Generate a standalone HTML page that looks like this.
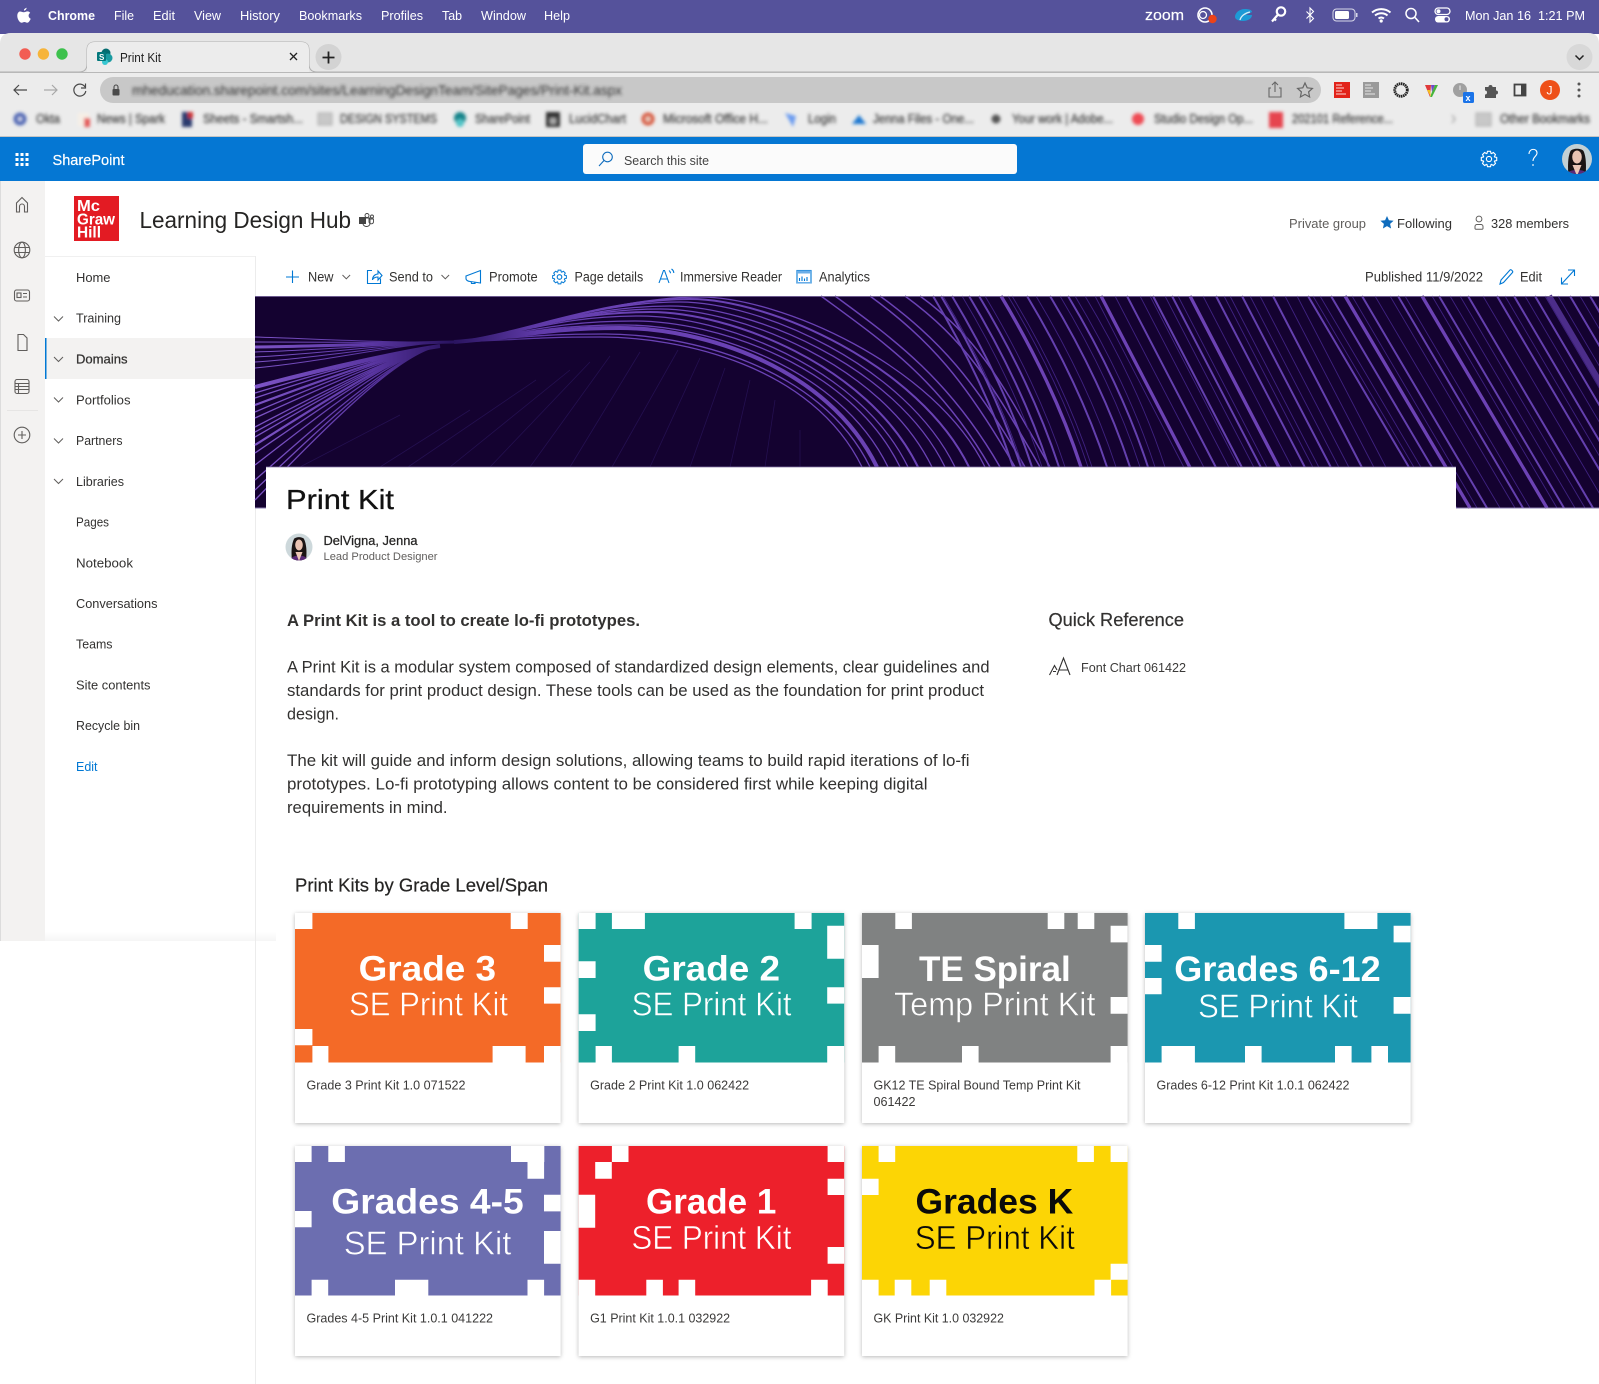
<!DOCTYPE html>
<html lang="en"><head><meta charset="utf-8"><title>Print Kit</title>
<style>
html,body{margin:0;padding:0;background:#fff;width:1599px;height:1384px;overflow:hidden}
svg{display:block;font-family:"Liberation Sans",Arial,sans-serif}
.n{font-size:13px;fill:#323130}
.t{font-size:13.5px;fill:#323130}
.b{font-size:16.5px;fill:#323130}
.m{font-size:12.5px;fill:#fff}
.c{font-size:13px;fill:#3b3a39}
.h1{font-size:35px;font-weight:700;fill:#fff}
.h2{font-size:33px;fill:#fff;stroke-width:.55}
.bk{font-size:12.5px;fill:#444;stroke:#444;stroke-width:.3}
.ri{fill:none;stroke:#605e5c;stroke-width:1.1}
.bi{fill:none;stroke:#0078d4;stroke-width:1.1}
.ch{fill:none;stroke:#605e5c;stroke-width:1}
.card{fill:#fff;filter:drop-shadow(0 1px 2px rgba(0,0,0,.28))}
</style></head><body>
<svg width="1599" height="1384" viewBox="0 0 1599 1384" xmlns="http://www.w3.org/2000/svg">
<defs>
<filter id="bl" x="-5%" y="-60%" width="110%" height="220%"><feGaussianBlur stdDeviation="1.6"/></filter>
<clipPath id="av1"><circle cx="1577" cy="159" r="15"/></clipPath>
<clipPath id="av2"><circle cx="299" cy="547" r="13.5"/></clipPath>
<linearGradient id="fd" x1="0" y1="0" x2="0" y2="1"><stop offset="0" stop-color="#fff"/><stop offset="1" stop-color="#f6f6f6"/></linearGradient>
<linearGradient id="lf" gradientUnits="userSpaceOnUse" x1="255" y1="0" x2="450" y2="0"><stop offset="0" stop-color="#7d54c6"/><stop offset=".6" stop-color="#5a36a2"/><stop offset="1" stop-color="#2a1460"/></linearGradient>
<linearGradient id="lr" gradientUnits="userSpaceOnUse" x1="454" y1="0" x2="620" y2="0"><stop offset="0" stop-color="#2a1460"/><stop offset=".5" stop-color="#5f3aa8"/><stop offset="1" stop-color="#6a42b4"/></linearGradient>
<path id="gear" d="M4.98-1.81L6.87-1.34 6.87 1.34 4.98 1.81 4.8 2.24 5.8 3.91 3.91 5.8 2.24 4.8 1.81 4.98 1.34 6.87-1.34 6.87-1.81 4.98-2.24 4.8-3.91 5.8-5.8 3.91-4.8 2.24-4.98 1.81-6.87 1.34-6.87-1.34-4.98-1.81-4.8-2.24-5.8-3.91-3.91-5.8-2.24-4.8-1.81-4.98-1.34-6.87 1.34-6.87 1.81-4.98 2.24-4.8 3.91-5.8 5.8-3.91 4.8-2.24Z"/>
</defs>
<rect width="1599" height="1384" fill="#fff"/>

<!-- mac menu bar -->
<rect width="1599" height="34" fill="#55529b"/>
<path d="M24 9.5c1-1.3 2.200-1.700 2.600-1.800 0 1.300-1 2.700-2.600 2.900zM20 11.500c1.500 0 2.200.8 3.700.8s2.200-.9 3.800-.9c1 0 2 .5 2.700 1.500-2.400 1.500-2 4.800.5 5.800-.7 1.800-2 4-3.500 4-1 0-1.600-.7-2.800-.7s-1.800.7-2.800.7c-2.300 0-4.600-4.500-4.300-7.500.2-2.400 1.600-3.700 2.700-3.700z" fill="#fff"/>
<text class="m" x="48" y="20" font-weight="700" textLength="47" lengthAdjust="spacingAndGlyphs">Chrome</text>
<text class="m" x="114" y="20" textLength="20" lengthAdjust="spacingAndGlyphs">File</text>
<text class="m" x="153" y="20" textLength="22" lengthAdjust="spacingAndGlyphs">Edit</text>
<text class="m" x="194" y="20" textLength="27" lengthAdjust="spacingAndGlyphs">View</text>
<text class="m" x="240" y="20" textLength="40" lengthAdjust="spacingAndGlyphs">History</text>
<text class="m" x="299" y="20" textLength="63" lengthAdjust="spacingAndGlyphs">Bookmarks</text>
<text class="m" x="381" y="20" textLength="42" lengthAdjust="spacingAndGlyphs">Profiles</text>
<text class="m" x="442" y="20" textLength="20" lengthAdjust="spacingAndGlyphs">Tab</text>
<text class="m" x="481" y="20" textLength="45" lengthAdjust="spacingAndGlyphs">Window</text>
<text class="m" x="544" y="20" textLength="26" lengthAdjust="spacingAndGlyphs">Help</text>
<text x="1145" y="20" font-size="15" fill="#fff" stroke="#fff" stroke-width=".2" textLength="39" lengthAdjust="spacingAndGlyphs">zoom</text>
<circle cx="1205" cy="15" r="7" fill="none" stroke="#fff" stroke-width="1.6"/><circle cx="1203" cy="15" r="3.500" fill="none" stroke="#fff" stroke-width="1.300"/><circle cx="1212.500" cy="19" r="4.200" fill="#ec4318"/>
<path d="M1235 17c0-4 4-8 10-8 4 0 7 1 7 3l-6 3h6c0 4-5 6-9 6-5 0-8-2-8-4z" fill="#1d9ad6"/><path d="M1240 20c1-4 5-7 10-8" fill="none" stroke="#d8eef8" stroke-width="1.300"/>
<circle cx="1281" cy="11.500" r="4.200" fill="none" stroke="#fff" stroke-width="2.200"/><path d="M1278 14.500l-6 7M1274 18.500l2 2" stroke="#fff" stroke-width="2.200" fill="none"/>
<path d="M1306.500 11.500l7 7-3.500 3.500v-14l3.500 3.500-7 7" fill="none" stroke="#fff" stroke-width="1.100"/>
<rect x="1333" y="9" width="22" height="12" rx="3.500" fill="none" stroke="#d8d8e8" stroke-width="1"/><rect x="1335" y="11" width="14" height="8" rx="1.500" fill="#fff"/><rect x="1356" y="13" width="1.500" height="4" fill="#d8d8e8"/>
<path d="M1372 12.500c5.500-4.500 13-4.500 18.500 0M1375 15.500c3.800-3 9-3 12.500 0M1378.500 18.500c1.800-1.300 3.800-1.300 5.500 0" fill="none" stroke="#fff" stroke-width="2"/><circle cx="1381.200" cy="21" r="1.600" fill="#fff"/>
<circle cx="1411" cy="13.500" r="5" fill="none" stroke="#fff" stroke-width="1.500"/><path d="M1415 17.500l4 4.500" stroke="#fff" stroke-width="1.600"/>
<rect x="1435" y="8" width="15" height="6.500" rx="3.200" fill="none" stroke="#fff" stroke-width="1.300"/><rect x="1435" y="16" width="15" height="6.500" rx="3.200" fill="#fff"/><circle cx="1438.500" cy="11.200" r="2" fill="#fff"/><circle cx="1446.500" cy="19.200" r="2" fill="#55529b"/>
<text class="m" x="1465" y="20" font-size="13" textLength="66" lengthAdjust="spacingAndGlyphs">Mon Jan 16</text>
<text class="m" x="1538" y="20" textLength="47" lengthAdjust="spacingAndGlyphs">1:21 PM</text>

<!-- tab strip -->
<path d="M0 44Q0 33 11 33H1588Q1599 33 1599 44V72H0z" fill="#e6e6e6"/>
<path d="M0 72H79Q87 72 87 64V50Q87 42 95 42H301Q309 42 309 50V64Q309 72 317 72H1599" fill="none" stroke="#b0b0b0" stroke-width="1"/>
<path d="M87 72Q87 72 87 64V50Q87 42 95 42H301Q309 42 309 50V64Q309 72 309 73H87z" fill="#ececec"/>
<circle cx="25" cy="54" r="5.700" fill="#f25d53"/><circle cx="43.400" cy="54" r="5.700" fill="#f6b43a"/><circle cx="62" cy="54" r="5.700" fill="#3dc14d"/>
<circle cx="106" cy="53" r="4.500" fill="#036c70"/><circle cx="108" cy="58" r="4.500" fill="#1a9ba1"/><circle cx="105" cy="62" r="3" fill="#37c6d0"/><rect x="97" y="52" width="9" height="9" rx="1" fill="#03787c"/><text x="99" y="60" font-size="8" fill="#fff" font-weight="700">S</text>
<text x="120" y="62" font-size="12.500" fill="#222" textLength="41" lengthAdjust="spacingAndGlyphs">Print Kit</text>
<path d="M290 53l7 7M297 53l-7 7" stroke="#222" stroke-width="1.300" fill="none"/>
<circle cx="328.500" cy="57" r="13" fill="#d3d3d3"/><path d="M322.500 57.500h12M328.500 51.500v12" stroke="#222" stroke-width="1.800"/>
<circle cx="1579.500" cy="57" r="13" fill="#d8d8d8"/><path d="M1575.500 55.500l4 4 4-4" stroke="#222" stroke-width="1.500" fill="none"/>

<!-- toolbar -->
<rect y="73" width="1599" height="64" fill="#ececec"/>
<rect y="72" width="1599" height="1" fill="#b8b8b8"/>
<rect y="136" width="1599" height="1" fill="#c4c4c4"/>
<rect x="100" y="77" width="1221" height="26" rx="13" fill="#c8c8c8"/>
<path d="M27 90H14M19 85l-5 5 5 5" fill="none" stroke="#4a4a4a" stroke-width="1.200"/>
<path d="M44 90h13M52 85l5 5-5 5" fill="none" stroke="#a8a8a8" stroke-width="1.200"/>
<path d="M85 87a6 6 0 1 0 .8 4M85.500 83.500v4.500h-4.500" fill="none" stroke="#4a4a4a" stroke-width="1.200"/>
<rect x="112.500" y="89" width="7" height="6.500" rx="1" fill="#4a4a4a"/><path d="M114 89v-2a2 2 0 0 1 4 0v2" fill="none" stroke="#4a4a4a" stroke-width="1.100"/>
<text x="132" y="95" font-size="14" fill="#333" filter="url(#bl)" textLength="490" lengthAdjust="spacingAndGlyphs">mheducation.sharepoint.com/sites/LearningDesignTeam/SitePages/Print-Kit.aspx</text>
<path d="M1271 88h-2v9h12v-9h-2M1275 92v-10M1272 85l3-3 3 3" fill="none" stroke="#666" stroke-width="1.100"/>
<path d="M1305 83l2.200 4.800 5.200.6-3.800 3.500 1 5.100-4.600-2.600-4.600 2.600 1-5.100-3.800-3.500 5.200-.6z" fill="none" stroke="#666" stroke-width="1.200"/>
<rect x="1334" y="82" width="16" height="16" fill="#e2231a"/><path d="M1336 85h6M1336 88h8M1336 91h6M1336 94h10" stroke="#f7b5b0" stroke-width="1.200"/>
<rect x="1363" y="82" width="16" height="16" fill="#9a9a9a"/><path d="M1365 85h6M1365 88h8M1365 91h6M1365 94h10" stroke="#d6d6d6" stroke-width="1.200"/>
<circle cx="1401" cy="90" r="6.300" fill="none" stroke="#222" stroke-width="2.800" stroke-dasharray="1.500 .6"/>
<path d="M1425 85h6l-1 12z" fill="#e03a3a"/><path d="M1431 85h4l-3 7z" fill="#7048c8"/><path d="M1435 85h3l-6 12-2 0 2-5z" fill="#46b53c"/><path d="M1427 90l3 0 1 7z" fill="#f4c020"/>
<circle cx="1460" cy="90" r="7" fill="#a0a0a0"/><path d="M1460 85.500v4.500" stroke="#eee" stroke-width="1"/><rect x="1463" y="92" width="11" height="11" rx="1.500" fill="#1a73e8"/><text x="1465.500" y="101" font-size="9" font-weight="700" fill="#fff">x</text>
<path d="M1485 87h3.500a2 2 0 0 1 4 0h3.500v3.500a2 2 0 0 1 0 4v3.500h-11v-3.500a2 2 0 0 0 0-4z" fill="#555"/>
<rect x="1514.500" y="84.500" width="11" height="11" fill="none" stroke="#444" stroke-width="1.800"/><rect x="1521" y="84.500" width="4.500" height="11" fill="#444"/>
<circle cx="1550" cy="90" r="10" fill="#ee5019"/><text x="1546.500" y="94.500" font-size="12" fill="#fff">J</text>
<circle cx="1579" cy="84" r="1.500" fill="#555"/><circle cx="1579" cy="90" r="1.500" fill="#555"/><circle cx="1579" cy="96" r="1.500" fill="#555"/>

<!-- bookmarks (blurred) -->
<g filter="url(#bl)">
<circle cx="20" cy="119" r="6.500" fill="#5169b5"/><circle cx="20" cy="119" r="2" fill="#dfe4f5"/>
<text class="bk" x="36" y="123" textLength="24" lengthAdjust="spacingAndGlyphs">Okta</text>
<rect x="78" y="113" width="11" height="13" fill="#f7efe6"/><rect x="84" y="118" width="6" height="9" fill="#e45a5a"/>
<text class="bk" x="97" y="123" textLength="68" lengthAdjust="spacingAndGlyphs">News | Spark</text>
<rect x="182" y="112" width="10" height="15" fill="#2a3b6e"/><rect x="188" y="112" width="5" height="6" fill="#c33"/>
<text class="bk" x="203" y="123" textLength="100" lengthAdjust="spacingAndGlyphs">Sheets - Smartsh...</text>
<rect x="318" y="113" width="14" height="12" fill="#c8c8c8" stroke="#aaa"/>
<text class="bk" x="340" y="123" textLength="97" lengthAdjust="spacingAndGlyphs">DESIGN SYSTEMS</text>
<circle cx="460" cy="118" r="6" fill="#15848a"/><circle cx="460" cy="123" r="4" fill="#52c5c8"/>
<text class="bk" x="475" y="123" textLength="55" lengthAdjust="spacingAndGlyphs">SharePoint</text>
<rect x="546" y="112" width="14" height="15" fill="#333"/><rect x="550" y="118" width="6" height="6" fill="#aaa"/>
<text class="bk" x="569" y="123" textLength="57" lengthAdjust="spacingAndGlyphs">LucidChart</text>
<circle cx="648" cy="119" r="6.500" fill="#d8563a"/><circle cx="648" cy="119" r="2.800" fill="#e8c8b8"/>
<text class="bk" x="663" y="123" textLength="105" lengthAdjust="spacingAndGlyphs">Microsoft Office H...</text>
<path d="M785 113l11 3-3 11z" fill="#6d9df0"/>
<text class="bk" x="808" y="123" textLength="28" lengthAdjust="spacingAndGlyphs">Login</text>
<path d="M852 124l7-9 7 9z" fill="#1f78d1"/>
<text class="bk" x="873" y="123" textLength="101" lengthAdjust="spacingAndGlyphs">Jenna Files - One...</text>
<circle cx="996" cy="119" r="4.500" fill="#555"/>
<text class="bk" x="1012" y="123" textLength="101" lengthAdjust="spacingAndGlyphs">Your work | Adobe...</text>
<circle cx="1138" cy="119" r="6" fill="#ef4b55"/>
<text class="bk" x="1154" y="123" textLength="99" lengthAdjust="spacingAndGlyphs">Studio Design Op...</text>
<rect x="1269" y="112" width="14" height="16" fill="#e6454f"/>
<text class="bk" x="1292" y="123" textLength="101" lengthAdjust="spacingAndGlyphs">202101 Reference...</text>
<path d="M1452 115l3 4-3 4" fill="none" stroke="#888"/>
<rect x="1476" y="113" width="15" height="13" fill="#c8c8c8" stroke="#aaa"/>
<text class="bk" x="1500" y="123" textLength="90" lengthAdjust="spacingAndGlyphs">Other Bookmarks</text>
</g>

<!-- SharePoint blue bar -->
<rect y="137" width="1599" height="44" fill="#0577d3"/>
<g fill="#fff"><rect x="15.500" y="153" width="3" height="3"/><rect x="20.500" y="153" width="3" height="3"/><rect x="25.500" y="153" width="3" height="3"/><rect x="15.500" y="158" width="3" height="3"/><rect x="20.500" y="158" width="3" height="3"/><rect x="25.500" y="158" width="3" height="3"/><rect x="15.500" y="163" width="3" height="3"/><rect x="20.500" y="163" width="3" height="3"/><rect x="25.500" y="163" width="3" height="3"/></g>
<text x="52.500" y="165" font-size="15" fill="#fff" stroke="#fff" stroke-width=".2" textLength="72" lengthAdjust="spacingAndGlyphs">SharePoint</text>
<rect x="583" y="144" width="434" height="30" rx="3" fill="#fbfbfb"/>
<circle cx="607.500" cy="157" r="4.800" fill="none" stroke="#0f6cbd" stroke-width="1.100"/><path d="M604 160.500l-5 5.500" stroke="#0f6cbd" stroke-width="1.100"/>
<text x="624" y="165" font-size="13" fill="#444" textLength="85" lengthAdjust="spacingAndGlyphs">Search this site</text>
<use href="#gear" transform="translate(1489 159) scale(1.120)" fill="none" stroke="#fff" stroke-width="1"/><circle cx="1489" cy="159" r="2.600" fill="none" stroke="#fff" stroke-width="1.100"/>
<path d="M1529 154c0-6 8-6 8-1 0 3-4 4-4 8M1533 164v2" fill="none" stroke="#fff" stroke-width="1.100"/>
<g clip-path="url(#av1)"><rect x="1560" y="142" width="34" height="34" fill="#c3d0d4"/><path d="M1568.500 176c-1-10-.5-20 2-25 2-3 11-3 13 0 2.500 5 3 15 2 25z" fill="#1b1414"/><ellipse cx="1577" cy="157" rx="4.800" ry="6.500" fill="#eac3b2"/><path d="M1564 176c2-4 7-6 13-6s11 2 13 6z" fill="#5a2a78"/><path d="M1572.500 165l4.500 11 4.500-11z" fill="#ecc6b6"/></g>

<!-- left rail -->
<rect x="0" y="181" width="45" height="760" fill="#f3f2f1"/>
<rect x="0" y="181" width="1" height="760" fill="#dcdcdc"/>
<path class="ri" d="M16.500 212V203L22 197.500 27.500 203V212H24.500V206.500A2.500 2.500 0 0 0 19.500 206.500V212Z"/>
<circle class="ri" cx="22" cy="250" r="7.800"/><ellipse class="ri" cx="22" cy="250" rx="3.400" ry="7.800"/><path class="ri" d="M14.500 247.500h15M14.500 252.500h15"/>
<rect class="ri" x="14.500" y="290" width="15" height="11" rx="2"/><rect class="ri" x="17" y="293" width="4" height="4.500"/><path class="ri" d="M23 293.500h4M23 297h4"/>
<path class="ri" d="M18 334.500h5.500l3.500 3.500v12.500h-9z"/>
<rect class="ri" x="15" y="379.500" width="14" height="14" rx="2"/><path class="ri" d="M15 383.500h14M15 386.500h14M15 389.500h14M18.500 383.500v10"/>
<rect x="7" y="410" width="31" height="1" fill="#e6e5e4"/>
<circle class="ri" cx="22" cy="435" r="7.800"/><path class="ri" d="M22 431v8M18 435h8"/>

<!-- nav -->
<rect x="45" y="932" width="231" height="9" fill="url(#fd)"/>
<rect x="255" y="256" width="1" height="1128" fill="#ececec"/>
<rect x="45" y="256" width="210" height="1" fill="#f0f0f0"/>
<rect x="45" y="338" width="210" height="41" fill="#f3f2f1"/>
<rect x="45" y="338" width="1.500" height="41" fill="#0078d4"/>
<text class="n" x="76" y="282" textLength="34.500" lengthAdjust="spacingAndGlyphs">Home</text>
<text class="n" x="76" y="322.700" textLength="45" lengthAdjust="spacingAndGlyphs">Training</text>
<text class="n" x="76" y="363.500" stroke="#323130" stroke-width=".25" textLength="51.500" lengthAdjust="spacingAndGlyphs">Domains</text>
<text class="n" x="76" y="404.500" textLength="54.500" lengthAdjust="spacingAndGlyphs">Portfolios</text>
<text class="n" x="76" y="445" textLength="46.500" lengthAdjust="spacingAndGlyphs">Partners</text>
<text class="n" x="76" y="486" textLength="48" lengthAdjust="spacingAndGlyphs">Libraries</text>
<text class="n" x="76" y="526.700" textLength="33" lengthAdjust="spacingAndGlyphs">Pages</text>
<text class="n" x="76" y="567.500" textLength="57" lengthAdjust="spacingAndGlyphs">Notebook</text>
<text class="n" x="76" y="608" textLength="81.500" lengthAdjust="spacingAndGlyphs">Conversations</text>
<text class="n" x="76" y="648.700" textLength="36.500" lengthAdjust="spacingAndGlyphs">Teams</text>
<text class="n" x="76" y="689.500" textLength="74.500" lengthAdjust="spacingAndGlyphs">Site contents</text>
<text class="n" x="76" y="730" textLength="64" lengthAdjust="spacingAndGlyphs">Recycle bin</text>
<text class="n" x="76" y="771" style="fill:#0078d4" textLength="21.500" lengthAdjust="spacingAndGlyphs">Edit</text>
<path class="ch" d="M54 316.500l4.500 4.500 4.500-4.500M54 357l4.500 4.500 4.500-4.500M54 397.500l4.500 4.500 4.500-4.500M54 438.500l4.500 4.500 4.500-4.500M54 479l4.500 4.500 4.500-4.500"/>

<!-- site header -->
<rect x="74" y="196" width="45" height="45" fill="#e31b23"/>
<g font-size="15.500" font-weight="700" fill="#fff"><text x="77" y="211" textLength="23" lengthAdjust="spacingAndGlyphs">Mc</text><text x="77" y="224.500" textLength="38" lengthAdjust="spacingAndGlyphs">Graw</text><text x="77" y="237.500" textLength="24" lengthAdjust="spacingAndGlyphs">Hill</text></g>
<text x="139.500" y="228" font-size="23" fill="#252423" textLength="211.500" lengthAdjust="spacingAndGlyphs">Learning Design Hub</text>
<g fill="none" stroke="#444" stroke-width=".9"><circle cx="367" cy="215.500" r="2"/><circle cx="372" cy="216.500" r="1.500"/><path d="M369 219h4.500v3a2.300 2.300 0 0 1-4.500 0z"/><path d="M363 218h7v5.500a3.500 3 0 0 1-7 0z"/></g><path d="M359 217h7v7h-7z" fill="#444"/>
<text x="1289" y="228" font-size="13" fill="#605e5c" textLength="77" lengthAdjust="spacingAndGlyphs">Private group</text>
<path d="M1387 216l1.900 4.300 4.700.5-3.500 3.100 1 4.600-4.100-2.400-4.100 2.400 1-4.600-3.500-3.100 4.700-.5z" fill="#0f6cbd"/>
<text x="1397" y="228" font-size="13" fill="#323130" textLength="55" lengthAdjust="spacingAndGlyphs">Following</text>
<circle cx="1479" cy="219" r="2.900" fill="none" stroke="#605e5c"/><path d="M1475 228.500v-2a2 2 0 0 1 2-2h4a2 2 0 0 1 2 2v2a1 1 0 0 1-1 .8h-6a1 1 0 0 1-1-.8z" fill="none" stroke="#605e5c"/>
<text x="1491" y="228" font-size="13" fill="#323130" textLength="78" lengthAdjust="spacingAndGlyphs">328 members</text>

<!-- command bar -->
<path class="bi" d="M292.500 270.500v12.500M286 277h13"/>
<text class="t" x="308" y="281.500" textLength="25.500" lengthAdjust="spacingAndGlyphs">New</text>
<path class="ch" d="M342.500 275l3.800 3.800 3.800-3.800M441.500 275l3.800 3.800 3.800-3.800"/>
<path class="bi" d="M372 270.500h-4.500v13h13v-5M372.500 280c0-3.500 2.500-6 5.500-6V271l4 4.500-4 4.500v-3c-2.500 0-4 .5-5.500 2.500z"/>
<text class="t" x="389" y="281.500" textLength="44" lengthAdjust="spacingAndGlyphs">Send to</text>
<path class="bi" d="M466 276l14.500-5.500v12.500l-10-1.500c-2 0-4.500-1-4.500-3zM471 281.500l.5 2h3.500l-.5-1.500"/>
<text class="t" x="489" y="281.500" textLength="48.700" lengthAdjust="spacingAndGlyphs">Promote</text>
<use href="#gear" transform="translate(559.500 277)" fill="none" stroke="#0078d4" stroke-width="1"/><circle class="bi" cx="559.500" cy="277" r="2.300"/>
<text class="t" x="574.500" y="281.500" textLength="68.700" lengthAdjust="spacingAndGlyphs">Page details</text>
<path class="bi" d="M659 283l4.500-12.500h1L669 283M660.500 279h7M669 270.500c1 .8 1.500 1.700 1.500 2.800M671.500 269c1.500 1 2.300 2.500 2.300 4"/>
<text class="t" x="680" y="281.500" textLength="102" lengthAdjust="spacingAndGlyphs">Immersive Reader</text>
<rect class="bi" x="797" y="270.500" width="14" height="12.500"/><rect x="797" y="270.500" width="14" height="3" fill="#6aaee8"/><path class="bi" d="M799.500 281v-3M802 281v-4.500M804.500 281v-2.500M807 281v-4"/><rect x="797" y="282" width="14" height="1.500" fill="#6aaee8"/>
<text class="t" x="819" y="281.500" textLength="51" lengthAdjust="spacingAndGlyphs">Analytics</text>
<text class="t" x="1365" y="281.500" textLength="118" lengthAdjust="spacingAndGlyphs">Published 11/9/2022</text>
<path class="bi" d="M1500 284l1-4 9-10c1-1 3.500 1.500 2.500 2.500l-9 10z"/>
<text class="t" x="1520" y="281.500" textLength="22" lengthAdjust="spacingAndGlyphs">Edit</text>
<path class="bi" d="M1562 283.500l12-13M1568 270h6.500v6M1561.500 277.500v6.500h6.500"/>

<!-- hero -->
<rect x="255" y="296" width="1344" height="212" fill="#140230"/>
<g fill="none" stroke="#241050" stroke-width=".8">
<path d="M408 467L536 380M450 467L570 370M490 467L590 362M530 467L610 356M570 467L640 352M612 467L678 350M650 467L700 358M690 467L725 368M730 467L750 380M765 467L775 400M800 467L800 430M380 467L470 410M300 467L400 415"/>
</g>
<!-- left bundles -->
<g fill="none" stroke="url(#lf)">
<path stroke-width="1" d="M255 337C320 339 390 343 454 342M255 342C330 342 400 343 454 342M255 352C330 350 400 343 454 342M255 357C330 353 400 343 454 342M255 362C330 357 400 343 454 342M255 368C330 361 400 343 454 342"/>
<path stroke-width="3" d="M255 347C330 346 400 343 454 342"/>
<path stroke-width="4" d="M255 387C330 367 400 352 440 346"/>
<path stroke-width="1.300" d="M255 393C330 370 400 352 440 346M255 398C330 373 400 352 440 346M255 412C330 380 400 352 440 346M255 418C330 384 400 352 440 346M255 427C330 388 400 352 440 346M255 432C330 391 400 352 440 346M255 437C330 394 400 352 440 346M255 453C330 402 400 352 440 346M255 465C330 407 400 352 440 346M255 480C330 414 400 352 440 346M255 490C330 419 400 352 440 346M255 500C330 423 400 352 440 346"/>
<path stroke-width="2.200" d="M255 405C330 377 400 352 440 346M255 445C330 398 400 352 440 346"/>
</g>
<!-- right wave -->
<g fill="none" stroke="url(#lr)"><path stroke-width="1.300" d="M454 342C520 340 530 337 600 337M454 342C520 338 535 334 605 334M454 342C520 336 540 325 625 325M454 342C520 335 550 321 635 321M454 342C520 335 555 316 640 316M454 342C520 335 570 309 660 309M454 342C520 335 580 306 670 306M454 342C520 335 590 302 680 302M454 342C520 335 610 297 700 297"/><path stroke-width="4" d="M454 342C520 337 545 328 620 328"/><path stroke-width="2" d="M454 342C520 335 560 312 650 312M454 342C520 335 600 299 690 299"/></g>
<g fill="none" stroke="#6a42b4">
<path stroke-width="1.300" d="M600 337C680 337 812 365 862 467M605 334C685 334 820 365 870 467M625 325C705 325 838 365 888 467M635 321C715 321 850 365 900 467M640 316C720 316 858 365 908 467M660 309C740 309 882 365 932 467M670 306C750 306 895 365 945 467M680 302C760 302 905 365 955 467M700 297C780 297 935 365 985 467"/>
<path stroke-width="4" d="M620 328C700 328 827 365 877 467"/>
<path stroke-width="2" d="M650 312C730 312 868 365 918 467M690 299C770 299 919 365 969 467"/>
<path stroke-width="1.500" d="M821 296C881 340 940 380 990 467M835 296C895 340 950 380 1000 467M870 296C930 340 965 380 1015 467M880 296C940 340 975 380 1025 467M905 296C965 340 990 380 1040 467M920 296C980 340 1000 380 1050 467"/>
</g>
<!-- diagonal lines -->
<g stroke="#3f2280" stroke-width=".9" fill="none">
<path d="M943 296c30 50 60 110 80 171l13 41M962 296c30 50 60 110 80 171l13 41M985 296c30 50 60 110 80 171l13 41M1012 296c30 50 60 110 80 171l13 41M1036 296c30 50 60 110 80 171l13 41M1060 296c30 50 60 110 80 171l13 41M1075 296c30 50 60 110 80 171l13 41M1085 296c30 50 60 110 80 171l13 41M1115 296l110 212M1140 296l110 212M1165 296l110 212M1178 296l110 212M1203 296l110 212M1230 296l110 212M1260 296l110 212M1285 296l110 212M1297 296l110 212M1320 296l125 212M1375 296l125 212M1390 296l125 212M1405 296l125 212M1450 296l125 212M1483 296l125 212M1525 296l125 212M1558 296l125 212M1580 296l125 212M1008 296c30 50 60 110 80 171l13 41M1095 296l110 212M1150 296l110 212M1224 296l110 212M1250 296l110 212M1313 296l125 212M1352 296l125 212M1432 296l125 212M1460 296l125 212M1505 296l125 212M1545 296l125 212"/>
</g>
<g stroke="#6440ae" stroke-width="2" fill="none">
<path d="M933 296c30 50 60 110 80 171l13 41M941 296c30 50 60 110 80 171l13 41M952 296c30 50 60 110 80 171l13 41M969 296c30 50 60 110 80 171l13 41M979 296c30 50 60 110 80 171l13 41M1027 296c30 50 60 110 80 171l13 41M1050 296c30 50 60 110 80 171l13 41M1068 296c30 50 60 110 80 171l13 41M1127 296l110 212M1153 296l110 212M1172 296l110 212M1216 296l110 212M1242 296l110 212M1273 296l110 212M1308 296l125 212M1331 296l125 212M1362 296l125 212M1398 296l125 212M1439 296l125 212M1468 296l125 212M1497 296l125 212M1514 296l125 212M1535 296l125 212M1570 296l125 212M1590 296l125 212"/>
</g>
<g stroke="#6c42b4" stroke-width="3.300" fill="none">
<path d="M1001 296c30 50 60 110 80 171l13 41M1101 296l110 212M1190 296l110 212M1345 296l125 212M1422 296l125 212"/>
</g>
<path d="M1549 296l125 212" stroke="#4c2d8a" stroke-width="6" fill="none"/>
<rect x="255" y="296" width="1344" height="1" fill="#6b5a8e"/>
<rect x="255" y="507.500" width="11" height="1" fill="#8a7cb0"/>
<rect x="1456" y="507.500" width="143" height="1" fill="#8a7cb0"/>
<rect x="266" y="467" width="1190" height="45" fill="#fff"/>
<rect x="266" y="466.500" width="1190" height=".8" fill="#6b5a8e"/>

<!-- title -->
<text x="286" y="509" font-size="28" fill="#111" stroke="#111" stroke-width=".3" textLength="108" lengthAdjust="spacingAndGlyphs">Print Kit</text>
<g clip-path="url(#av2)"><rect x="285" y="533" width="28" height="28" fill="#cdd8db"/><path d="M292 561c-1-9-.5-17 2-22 2-2.500 8-2.500 10 0 2.500 5 3 13 2 22z" fill="#1b1414"/><ellipse cx="299" cy="545" rx="3.800" ry="5.500" fill="#eac3b2"/><path d="M289 561c2-4 6-5.500 10-5.500s8 1.500 10 5.500z" fill="#5a2a78"/><path d="M295.500 552l3.500 9 3.500-9z" fill="#ecc6b6"/></g>
<text x="323.500" y="545" font-size="13" fill="#252423" stroke="#252423" stroke-width=".25" textLength="94" lengthAdjust="spacingAndGlyphs">DelVigna, Jenna</text>
<text x="323.500" y="560" font-size="11" fill="#605e5c" textLength="114" lengthAdjust="spacingAndGlyphs">Lead Product Designer</text>

<!-- body -->
<text class="b" x="287" y="626" font-weight="700" textLength="353" lengthAdjust="spacingAndGlyphs">A Print Kit is a tool to create lo-fi prototypes.</text>
<text class="b" x="287" y="672.500" textLength="702.500" lengthAdjust="spacingAndGlyphs">A Print Kit is a modular system composed of standardized design elements, clear guidelines and</text>
<text class="b" x="287" y="696" textLength="697" lengthAdjust="spacingAndGlyphs">standards for print product design. These tools can be used as the foundation for print product</text>
<text class="b" x="287" y="719.500" textLength="52" lengthAdjust="spacingAndGlyphs">design.</text>
<text class="b" x="287" y="766" textLength="682.500" lengthAdjust="spacingAndGlyphs">The kit will guide and inform design solutions, allowing teams to build rapid iterations of lo-fi</text>
<text class="b" x="287" y="789.500" textLength="640.500" lengthAdjust="spacingAndGlyphs">prototypes. Lo-fi prototyping allows content to be considered first while keeping digital</text>
<text class="b" x="287" y="813" textLength="160.500" lengthAdjust="spacingAndGlyphs">requirements in mind.</text>

<text x="1048.500" y="626" font-size="18" fill="#323130" stroke="#323130" stroke-width=".2" textLength="135.500" lengthAdjust="spacingAndGlyphs">Quick Reference</text>
<path d="M1049.500 675l5-9.500 2.500 4.500M1053 671.500h3M1057 675l6.500-17 6.500 17M1059 670h9" fill="none" stroke="#323130" stroke-width="1.100"/>
<text x="1081" y="672" font-size="13" fill="#3b3a39" textLength="105" lengthAdjust="spacingAndGlyphs">Font Chart 061422</text>

<text x="295" y="891.500" font-size="18" fill="#252423" stroke="#252423" stroke-width=".2" textLength="253" lengthAdjust="spacingAndGlyphs">Print Kits by Grade Level/Span</text>

<!-- cards row 1 -->
<g transform="translate(295,913)"><rect class="card" width="265.600" height="210"/><rect width="265.600" height="149.500" fill="#f46a27"/>
<path fill="#fff" d="M0 0h17.400v16h-17.400zM215.700 0h17v16h-17zM249 32h16.600v16.700h-16.600zM249 74.300h16.600v16.300h-16.600zM0 116h17.400v16.300h-17.400zM17.400 133h16v16.500h-16zM197.600 133h33v16.500h-33zM249 133h16.600v16.500h-16.600z"/>
<text class="h1" x="63.600" y="67.700" textLength="137.500" lengthAdjust="spacingAndGlyphs">Grade 3</text>
<text class="h2" stroke="#f46a27" x="54" y="102.700" textLength="159" lengthAdjust="spacingAndGlyphs">SE Print Kit</text>
<text class="c" x="11.500" y="176.500" textLength="159" lengthAdjust="spacingAndGlyphs">Grade 3 Print Kit 1.0 071522</text></g>

<g transform="translate(578.600,913)"><rect class="card" width="265.600" height="210"/><rect width="265.600" height="149.500" fill="#1da39a"/>
<path fill="#fff" d="M0 0h17v16h-17zM33.300 0h33v16h-33zM216 0h17v16h-17zM248.600 12.700h17v33h-17zM0 48.300h17v16.700h-17zM248.600 74.300h17v16.300h-17zM0 101.300h17v16.700h-17zM17 133h16.300v16.500h-16.300zM100 133h16.600v16.500h-16.600zM248.600 133h17v16.500h-17z"/>
<text class="h1" x="64" y="67.700" textLength="137.500" lengthAdjust="spacingAndGlyphs">Grade 2</text>
<text class="h2" stroke="#1da39a" x="53" y="102.700" textLength="160" lengthAdjust="spacingAndGlyphs">SE Print Kit</text>
<text class="c" x="11.500" y="176.500" textLength="159" lengthAdjust="spacingAndGlyphs">Grade 2 Print Kit 1.0 062422</text></g>

<g transform="translate(862,913)"><rect class="card" width="265.600" height="210"/><rect width="265.600" height="149.500" fill="#808282"/>
<path fill="#fff" d="M33.300 0h16.600v16h-16.600zM185.700 0h16.600v16h-16.600zM215.700 0h16.600v16h-16.600zM248.600 12.700h17v16.700h-17zM0 32h16.600v33h-16.600zM248.600 84h17v16.700h-17zM16.600 133h16.600v16.500h-16.600zM100 133h16.600v16.500h-16.600zM248.600 133h17v16.500h-17z"/>
<text class="h1" x="57" y="68.200" textLength="151.700" lengthAdjust="spacingAndGlyphs">TE Spiral</text>
<text class="h2" stroke="#808282" x="32" y="102.700" textLength="201.500" lengthAdjust="spacingAndGlyphs">Temp Print Kit</text>
<text class="c" x="11.500" y="176.500" textLength="207" lengthAdjust="spacingAndGlyphs">GK12 TE Spiral Bound Temp Print Kit</text>
<text class="c" x="11.500" y="193" textLength="42" lengthAdjust="spacingAndGlyphs">061422</text></g>

<g transform="translate(1145,913)"><rect class="card" width="265.600" height="210"/><rect width="265.600" height="149.500" fill="#1b97b0"/>
<path fill="#fff" d="M33.300 0h16.600v16h-16.600zM199.400 0h33v16h-33zM248.600 12.700h17v16.700h-17zM0 32h16.600v16.700h-16.600zM0 65h16.600v16.300h-16.600zM248.600 84h17v16.700h-17zM16.600 133h33.300v16.500h-33.300zM100 133h16.600v16.500h-16.600zM190 133h16.600v16.500h-16.600zM226.400 133h16.600v16.500h-16.600z"/>
<text class="h1" x="29.300" y="68.200" textLength="206.400" lengthAdjust="spacingAndGlyphs">Grades 6-12</text>
<text class="h2" stroke="#1b97b0" x="53" y="104.300" textLength="160" lengthAdjust="spacingAndGlyphs">SE Print Kit</text>
<text class="c" x="11.500" y="176.500" textLength="193" lengthAdjust="spacingAndGlyphs">Grades 6-12 Print Kit 1.0.1 062422</text></g>

<!-- cards row 2 -->
<g transform="translate(295,1146)"><rect class="card" width="265.600" height="210"/><rect width="265.600" height="149.500" fill="#6c6eb0"/>
<path fill="#fff" d="M0 0h16.600v16h-16.600zM33.300 0h16.600v16h-16.600zM216 0h33.300v16h-33.300zM232.500 16h16.600v16.700h-16.600zM249 48.700h16.600v16.700h-16.600zM0 65h16.600v16.300h-16.600zM249 85h16.600v32.700h-16.600zM16.600 133.700h16.600v15.800h-16.600zM100 133.700h33.300v15.800h-33.300zM232.500 133.700h16.600v15.800h-16.600z"/>
<text class="h1" x="36.300" y="67.700" textLength="192.400" lengthAdjust="spacingAndGlyphs">Grades 4-5</text>
<text class="h2" stroke="#6c6eb0" x="48.800" y="108.700" textLength="167.600" lengthAdjust="spacingAndGlyphs">SE Print Kit</text>
<text class="c" x="11.500" y="176.300" textLength="186.500" lengthAdjust="spacingAndGlyphs">Grades 4-5 Print Kit 1.0.1 041222</text></g>

<g transform="translate(578.600,1146)"><rect class="card" width="265.600" height="210"/><rect width="265.600" height="149.500" fill="#ed202b"/>
<path fill="#fff" d="M33.300 0h16.600v16h-16.600zM16.600 16h16.600v16.700h-16.600zM249 0h16.600v16h-16.600zM249 32.700h16.600v16.300h-16.600zM0 48.700h16.600v33h-16.600zM249 101h16.600v16.700h-16.600zM0 133.700h16.600v15.800h-16.600zM67.700 133.700h16.600v15.800h-16.600zM100 133.700h16.600v15.800h-16.600zM232.500 133.700h16.600v15.800h-16.600z"/>
<text class="h1" x="67.400" y="67.700" textLength="130.300" lengthAdjust="spacingAndGlyphs">Grade 1</text>
<text class="h2" stroke="#ed202b" x="52.800" y="103" textLength="160" lengthAdjust="spacingAndGlyphs">SE Print Kit</text>
<text class="c" x="11.500" y="176.300" textLength="140" lengthAdjust="spacingAndGlyphs">G1 Print Kit 1.0.1 032922</text></g>

<g transform="translate(862,1146)"><rect class="card" width="265.600" height="210"/><rect width="265.600" height="149.500" fill="#fcd505"/>
<path fill="#fff" d="M16.600 0h16.600v16h-16.600zM215.300 0h16.600v16h-16.600zM248.600 0h17v16h-17zM0 32.700h16.600v16.300h-16.600zM248.600 117.700h17v16h-17zM0 133.700h16.600v15.800h-16.600zM32.700 133.700h16.600v15.800h-16.600zM67.700 133.700h16.600v15.800h-16.600zM232.500 133.700h16.600v15.800h-16.600z"/>
<text class="h1" style="fill:#0a0a0a" x="53.500" y="67.700" textLength="157.700" lengthAdjust="spacingAndGlyphs">Grades K</text>
<text class="h2" style="fill:#0a0a0a" stroke="#fcd505" x="52.800" y="103" textLength="160" lengthAdjust="spacingAndGlyphs">SE Print Kit</text>
<text class="c" x="11.500" y="176.300" textLength="130.400" lengthAdjust="spacingAndGlyphs">GK Print Kit 1.0 032922</text></g>
</svg>
</body></html>
